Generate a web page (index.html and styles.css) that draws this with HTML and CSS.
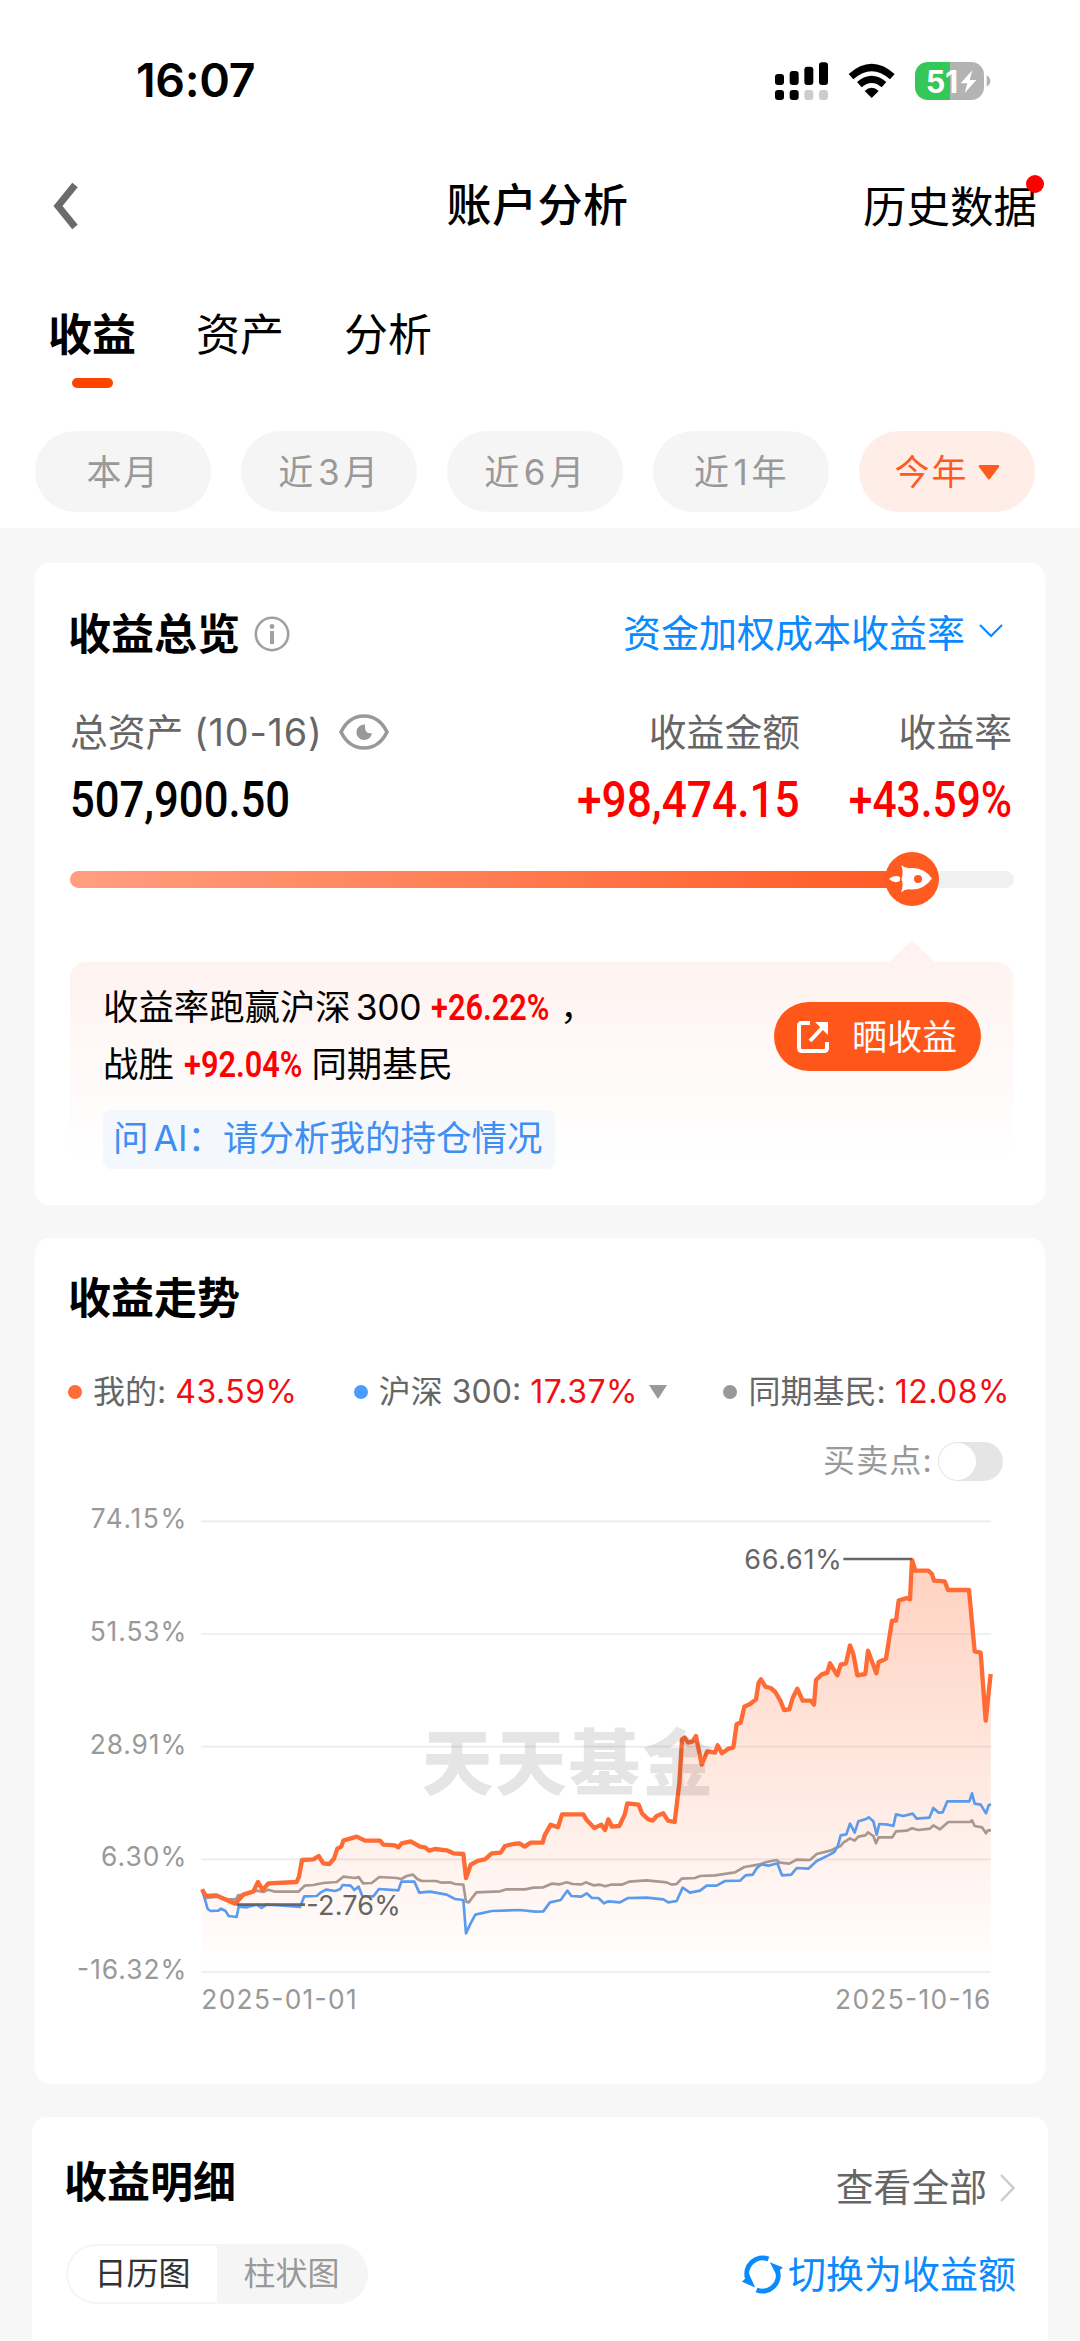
FILE: index.html
```html
<!DOCTYPE html>
<html lang="zh-CN">
<head>
<meta charset="utf-8">
<title>账户分析</title>
<link rel="stylesheet" href="styles.css">
</head>
<body>
<header class="top">
  <div class="status">
    <span class="time">16:07</span>
    <svg class="status-icons" viewBox="0 0 720 180">
      <g fill="#000">
        <rect x="45" y="69" width="27" height="33" rx="9"/><rect x="89" y="60" width="27" height="42" rx="9"/>
        <rect x="133" y="47" width="27" height="55" rx="9"/><rect x="177" y="34" width="27" height="68" rx="9"/>
        <rect x="45" y="117" width="27" height="30" rx="9"/><rect x="89" y="117" width="27" height="30" rx="9"/>
      </g>
      <g fill="#ccc"><rect x="133" y="117" width="27" height="30" rx="9"/><rect x="177" y="117" width="27" height="30" rx="9"/></g>
      <g fill="none" stroke="#000" stroke-width="21"><path d="M273 77Q335 22 397 77"/><path d="M298 101Q335 69 372 101"/></g>
      <path d="M314 120Q335 101 356 120L335 141Z"/>
      <clipPath id="bat"><rect x="465" y="33" width="207" height="114" rx="38"/></clipPath>
      <g clip-path="url(#bat)"><rect x="465" y="33" width="105" height="114" fill="#34c759"/><rect x="570" y="33" width="102" height="114" fill="#b3b3b3"/></g>
      <path d="M680 73Q691 79 691 90T680 107Z" fill="#b3b3b3"/>
      <text class="battery" x="497" y="125" textLength="98">51</text>
      <path d="M637 58L602 97H622L614 126L649 87H629Z" fill="#fff"/>
    </svg>
  </div>
  <nav class="nav">
    <svg class="back" viewBox="0 0 26 48"><path d="M23 3L6 24L23 45"/></svg>
    <h1 class="page-title">账户分析</h1>
    <span class="history">历史数据<i class="badge"></i></span>
  </nav>
  <div class="tabs">
    <span class="tab tab-on">收益</span><span class="tab">资产</span><span class="tab">分析</span>
  </div>
  <div class="pills">
    <span class="pill">本月</span><span class="pill">近<span class="num">3</span>月</span><span class="pill">近<span class="num">6</span>月</span><span class="pill">近<span class="num">1</span>年</span>
    <span class="pill pill-on">今年<svg class="caret" viewBox="0 0 22 16"><path d="M2 1H20Q22 1 21 3L12 15Q11 16 10 15L1 3Q0 1 2 1Z"/></svg></span>
  </div>
</header>

<main class="cards">
  <section class="card overview">
    <div class="card-head">
      <h2 class="card-title">收益总览</h2>
      <svg class="info" viewBox="0 0 36 36"><circle cx="18" cy="18" r="16.2" fill="none" stroke="#a0a0a0" stroke-width="2.6"/><circle cx="18" cy="10.5" r="2.4" fill="#a0a0a0"/><path d="M18 15V28" stroke="#a0a0a0" stroke-width="4"/></svg>
      <span class="method">资金加权成本收益率</span>
      <svg class="chev-down" viewBox="0 0 24 14"><path d="M1 1L12 12L23 1"/></svg>
    </div>
    <div class="stats">
      <div class="stat">
        <div class="label">总资产&nbsp;<span class="date">(10-16)</span>
          <svg class="eye" viewBox="0 0 50 36"><path d="M2 18Q10 2 25 2T48 18Q40 34 25 34T2 18Z" fill="none" stroke="#999" stroke-width="3.6"/><path d="M26 10.500A7.800 7.800 0 1 0 33 19Q25 20.500 26 10.500Z" fill="#999"/></svg>
        </div>
        <div class="value"><b class="din din-total">507,900.50</b></div>
      </div>
      <div class="stat right"><div class="label">收益金额</div><div class="value red"><b class="din din-gain">+98,474.15</b></div></div>
      <div class="stat right"><div class="label">收益率</div><div class="value red"><b class="din din-rate">+43.59%</b></div></div>
    </div>
    <div class="slider">
      <div class="slider-fill"></div>
      <svg class="rocket" viewBox="0 0 54 54"><circle cx="27" cy="27" r="27" fill="#ff5a1f"/><path d="M16 13Q21 17 26 16Q39 15 47 26.500Q39 38 26 37.500Q21 36 16 40.500Q19 33 16.500 27Q19 20 16 13Z" fill="#fff"/><circle cx="33" cy="27" r="4" fill="#ff5a1f"/><path d="M4 27Q9 22 15 25V29Q9 32 4 27Z" fill="#fff"/></svg>
    </div>
    <div class="callout">
      <div class="callout-row">
        <p class="beat">收益率跑赢沪深<span class="n300">300</span> <b class="din din-s">+26.22%</b><span class="comma">，</span><br>战胜 <b class="din din-s">+92.04%</b> 同期基民</p>
        <span class="share"><svg class="share-icon" viewBox="0 0 34 34"><path d="M14 3H6Q3 3 3 6V28Q3 31 6 31H28Q31 31 31 28V22"/><path d="M14 21L28 6"/><path d="M19 2H32V15Z" fill="#fff" stroke="none"/></svg>晒收益</span>
      </div>
      <span class="ask">问<span class="ai">AI</span>：请分析我的持仓情况</span>
    </div>
  </section>

  <section class="card trend">
    <h2 class="card-title">收益走势</h2>
    <div class="legend">
      <span class="key key-me"><i class="dot"></i>我的: <em>43.59%</em></span>
      <span class="key key-hs"><i class="dot"></i>沪深 300: <em>17.37%</em><svg class="tri" viewBox="0 0 18 14"><path d="M0 0H18L9 14Z"/></svg></span>
      <span class="key key-peer"><i class="dot"></i>同期基民: <em>12.08%</em></span>
    </div>
    <div class="points">买卖点:<span class="switch"></span></div>
    <svg class="chart" viewBox="-360 0 2880 1560">
      <defs><linearGradient id="area" gradientUnits="userSpaceOnUse" x1="0" y1="180" x2="0" y2="1416"><stop offset="0" stop-color="#ff6b35" stop-opacity=".31"/><stop offset=".5" stop-color="#ff6b35" stop-opacity=".16"/><stop offset="1" stop-color="#ff6b35" stop-opacity="0"/></linearGradient></defs>
      <path class="grid" d="M64 64H2433M64 402H2433M64 740H2433M64 1078H2433M64 1416H2433"/>
      <g class="axis" text-anchor="end"><text x="19" y="85" textLength="287">74.15%</text><text x="19" y="423" textLength="290">51.53%</text><text x="19" y="761" textLength="290">28.91%</text><text x="19" y="1099" textLength="256">6.30%</text><text x="19" y="1437" textLength="328">-16.32%</text></g>
      <g class="axis"><text x="64" y="1528" textLength="466">2025-01-01</text><text x="1965" y="1528" textLength="466">2025-10-16</text></g>
      <path fill="url(#area)" d="M66 1168L78 1188L108 1186L165 1211L190 1184L220 1174L234 1146L248 1170L265 1150L350 1146L357 1130L366 1080L400 1078L416 1068L430 1090L448 1092L462 1076L472 1046L490 1022L530 1010L555 1022L600 1026L655 1042L665 1032L692 1024L745 1052L765 1047L850 1062L858 1134L872 1094L895 1082L935 1060L962 1058L975 1038L1018 1030L1034 1040L1052 1028L1088 1028L1094 1006L1112 974L1134 982L1146 943L1210 943L1243 984L1264 974L1275 990L1285 958L1296 980L1318 978L1334 944L1342 910L1376 914L1386 940L1418 962L1450 940L1474 966L1484 964L1498 850L1506 720L1530 728L1548 708L1565 794L1582 754L1605 758L1613 736L1626 760L1660 742L1670 672L1682 668L1693 620L1710 612L1728 598L1743 538L1756 560L1786 576L1812 630L1828 628L1838 594L1852 566L1868 602L1902 614L1908 540L1950 490L1972 526L1982 494L1998 490L2010 436L2032 526L2056 522L2064 452L2089 520L2096 486L2118 476L2136 362L2148 362L2156 302L2190 298L2196 180L2206 212L2252 214L2262 242L2294 244L2304 270L2367 270L2384 454L2402 458L2417 662L2432 522V1416H66Z"/>
      <polyline class="line-peer" points="66,1168 78,1194 115,1190 145,1198 168,1198 174,1186 200,1182 215,1178 230,1172 250,1176 265,1169 285,1175 355,1175 374,1157 400,1155 430,1149 470,1146 490,1130 525,1134 536,1131 549,1150 575,1149 598,1131 650,1134 664,1137 680,1128 699,1124 712,1137 725,1143 768,1143 785,1148 810,1147 825,1152 850,1154 858,1205 866,1207 889,1177 960,1174 980,1168 1035,1168 1060,1163 1090,1162 1115,1151 1140,1153 1160,1147 1178,1152 1205,1153 1217,1147 1240,1156 1260,1154 1276,1159 1292,1154 1325,1154 1347,1145 1400,1141 1460,1147 1475,1154 1490,1152 1505,1136 1545,1134 1560,1128 1605,1126 1665,1117 1693,1101 1735,1094 1760,1086 1790,1080 1800,1088 1828,1091 1850,1079 1890,1080 1910,1062 1950,1052 1982,1038 1990,1028 2010,1015 2024,1022 2035,1010 2056,1006 2064,997 2080,1008 2088,1030 2096,1012 2137,1012 2148,994 2180,992 2196,985 2215,990 2250,986 2260,976 2280,988 2305,966 2370,966 2376,961 2384,978 2406,982 2418,1000 2424,991 2433,991"/>
      <polyline class="line-hs" points="66,1170 74,1195 83,1227 92,1233 115,1232 123,1226 136,1232 146,1248 170,1251 176,1220 200,1222 230,1214 245,1224 260,1214 300,1216 360,1221 373,1189 410,1188 423,1177 438,1169 465,1173 480,1168 488,1155 512,1157 523,1170 536,1160 547,1188 580,1189 597,1167 655,1171 664,1145 703,1145 718,1178 750,1175 800,1184 825,1197 850,1200 858,1300 870,1274 886,1244 935,1233 1020,1230 1065,1235 1090,1234 1110,1207 1142,1200 1162,1172 1174,1188 1204,1190 1220,1180 1236,1194 1255,1194 1272,1210 1285,1204 1320,1207 1344,1194 1400,1193 1450,1198 1465,1207 1490,1203 1508,1163 1530,1178 1560,1172 1580,1157 1610,1157 1635,1143 1680,1142 1697,1126 1718,1124 1730,1105 1745,1093 1765,1097 1792,1090 1806,1126 1834,1124 1850,1104 1885,1106 1910,1083 1945,1066 1963,1056 1974,1036 1982,1006 1999,1003 2010,971 2024,998 2035,964 2056,958 2066,952 2080,964 2090,1004 2098,972 2125,974 2140,978 2148,943 2170,948 2198,941 2210,956 2248,953 2260,924 2276,938 2288,937 2302,904 2368,904 2376,880 2384,911 2402,914 2418,940 2426,916 2433,913"/>
      <polyline class="line-me" points="66,1168 78,1188 108,1186 165,1211 190,1184 220,1174 234,1146 248,1170 265,1150 350,1146 357,1130 366,1080 400,1078 416,1068 430,1090 448,1092 462,1076 472,1046 484,1040 490,1022 530,1010 555,1022 600,1022 610,1034 645,1036 655,1042 665,1030 692,1024 720,1040 735,1042 747,1052 765,1047 800,1051 820,1060 850,1062 858,1134 872,1094 895,1082 915,1078 935,1060 962,1058 975,1038 1000,1032 1018,1030 1034,1040 1052,1028 1088,1028 1094,1006 1112,974 1134,982 1146,943 1210,943 1220,960 1243,984 1264,974 1275,990 1285,958 1296,980 1318,978 1334,944 1342,910 1376,914 1386,940 1405,958 1418,962 1430,948 1450,940 1464,962 1484,966 1498,850 1506,718 1514,713 1524,728 1538,724 1548,708 1565,794 1582,754 1605,758 1613,736 1626,760 1645,746 1660,742 1670,672 1682,668 1693,620 1710,612 1728,598 1736,548 1743,538 1756,560 1772,564 1786,576 1802,604 1812,630 1828,628 1838,594 1852,566 1868,602 1892,602 1902,614 1908,540 1924,524 1942,518 1950,490 1972,526 1982,494 1998,490 2010,436 2020,462 2032,526 2056,522 2064,452 2089,520 2096,486 2118,476 2136,362 2148,362 2156,302 2180,294 2190,298 2196,180 2206,212 2245,212 2256,222 2262,242 2294,244 2304,270 2367,270 2384,454 2402,458 2417,662 2432,522"/>
      <path class="leader" d="M170 1214H375M1990 177H2196"/>
      <g class="mark"><text x="379" y="1244" textLength="283">-2.76%</text><text x="1693" y="206" textLength="292">66.61%</text></g>
      <text class="watermark" x="725" y="868" textLength="876">天天基金</text>
    </svg>
  </section>

  <section class="card detail">
    <div class="card-head">
      <h2 class="card-title">收益明细</h2>
      <span class="all">查看全部</span>
      <svg class="chev-right" viewBox="0 0 15 28"><path d="M1 1L13.500 14L1 27"/></svg>
    </div>
    <div class="detail-row">
      <div class="segment"><span class="seg seg-on">日历图</span><span class="seg">柱状图</span></div>
      <span class="switch-to"><svg class="cycle" viewBox="0 0 124 118"><g fill="none" stroke="#0a8aff" stroke-width="15"><path d="M17 72A48 48 0 0 1 80 12"/><path d="M107 46A48 48 0 0 1 44 106"/></g><path d="M84 22L124 38L102 56ZM0 81L22 59L40 98Z" fill="#0a8aff"/></svg>切换为收益额</span>
    </div>
  </section>
</main>
</body>
</html>
```
FILE: styles.css
```css
* { box-sizing: border-box; }
body { margin: 0; width: 1080px; height: 2341px; overflow: hidden; background: #f7f7f7; color: #000; font-family: Inter, "Noto Sans CJK SC", sans-serif; line-height: 1.2; }
svg { display: block; flex: none; }
h1, h2, p { margin: 0; }
em { font-style: normal; }

.top { height: 528px; background: #fff; }
.status { height: 161px; display: flex; align-items: center; justify-content: space-between; padding: 0 80px 0 136px; }
.time { font-size: 46.5px; font-weight: 600; letter-spacing: -0.3px; }
.status-icons { width: 240px; height: 60px; }
.battery { font-size: 92px; font-weight: 700; fill: #fff; }
.nav { height: 90px; display: grid; grid-template-columns: 1fr auto 1fr; align-items: center; padding: 0 43px 0 52px; }
.back { width: 26px; height: 48px; fill: none; stroke: #6b6b6b; stroke-width: 7; }
.page-title { font-size: 45px; font-weight: 500; letter-spacing: 0.5px; margin-left: -14px; }
.history { position: relative; justify-self: end; font-size: 43.5px; padding-top: 2px; }
.badge { position: absolute; right: -7px; top: -4px; width: 18px; height: 18px; border-radius: 50%; background: #f00; }
.tabs { display: flex; gap: 60px; padding: 54px 0 0 48px; height: 180px; }
.tab { display: flex; flex-direction: column; align-items: center; gap: 13px; font-size: 44px; line-height: 60px; }
.tab-on { font-weight: 700; }
.tab-on::after { content: ""; width: 41px; height: 10px; border-radius: 5px; background: #ff4400; }
.pills { display: flex; gap: 30px; padding: 0 35px; }
.pill { width: 176px; height: 81px; border-radius: 41px; background: #f5f5f5; color: #999; font-size: 35px; letter-spacing: 1.6px; display: flex; align-items: center; justify-content: center; }
.num { margin: 0 2px 0 3px; }
.pill-on { background: #ffeee8; color: #ff5a1f; letter-spacing: 2px; gap: 9px; }
.caret { width: 22px; height: 16px; fill: #ff5a1f; }

.cards { display: flex; flex-direction: column; gap: 33px; padding: 35px 32px 0; }
.card { background: #fff; border-radius: 15px; }
.overview, .trend { margin: 0 3px; padding: 0 33px 0 35px; }
.card-head { display: flex; align-items: center; }
.card-title { margin-left: -2px; padding-top: 1px; font-size: 43px; font-weight: 700; line-height: 60px; }
.overview { height: 642px; padding-top: 40px; }
.info { width: 36px; height: 36px; margin-left: 14px; }
.method { margin-left: auto; font-size: 38px; color: #0a8aff; }
.chev-down { width: 24px; height: 14px; margin: -6px 9px 0 14px; fill: none; stroke: #0a8aff; stroke-width: 2.2; }
.stats { display: grid; grid-template-columns: 1fr auto 212px; margin-top: 38px; }
.right { text-align: right; }
.label { display: flex; align-items: center; font-size: 37.8px; line-height: 60px; color: #666; }
.right .label { justify-content: flex-end; }
.date { letter-spacing: 0.8px; }
.eye { width: 50px; height: 36px; margin-left: 16px; }
.value { height: 77px; line-height: 77px; }
.red, .din-s { color: #ff0000; }
em { color: #f01010; letter-spacing: 0.5px; }
.din { display: inline-block; font-family: Roboto, sans-serif; font-weight: 500; font-size: 50px; transform-origin: 0 50%; }
.din-total { transform: scaleX(0.872); }
.din-gain { transform-origin: 100% 50%; transform: scaleX(0.885); }
.din-rate { transform-origin: 100% 50%; transform: scaleX(0.85); }
.slider { position: relative; width: 944px; height: 17px; margin-top: 32px; border-radius: 9px; background: #f1f1f1; }
.slider-fill { width: 842px; height: 17px; border-radius: 9px; background: linear-gradient(90deg, #ff9f80, #ff5a24); }
.rocket { position: absolute; left: 815px; top: -19px; width: 54px; height: 54px; }
.callout { position: relative; width: 943px; height: 215px; margin-top: 74px; padding: 16px 32px 0 33px; border-radius: 16px; background: linear-gradient(#fef3f0, #fff 92%); }
.callout::before { content: ""; position: absolute; left: 818px; top: -22px; width: 48px; height: 23px; background: #fef3f0; clip-path: polygon(50% 0, 100% 100%, 0 100%); }
.callout-row { display: flex; justify-content: space-between; }
.beat { padding-top: 1px; font-size: 35.4px; line-height: 57px; white-space: nowrap; }
.n300 { margin-left: 5px; letter-spacing: -0.3px; }
.din-s { font-size: 37px; line-height: 50px; font-weight: 600; transform: scaleX(0.83); margin: 0 -25px 0 0; }
.comma { margin-left: 11px; }
.share { display: flex; align-items: center; width: 207px; height: 69px; margin-top: 24px; padding-left: 22px; gap: 22px; border-radius: 35px; background: #ff5619; color: #fff; font-size: 35px; }
.share-icon { width: 34px; height: 34px; fill: none; stroke: #fff; stroke-width: 4; }
.ask { display: flex; align-items: center; width: 452px; height: 59px; margin-top: 17px; padding-left: 10px; border-radius: 8px; background: #f4f7fc; color: #3f8ef2; font-size: 35.5px; white-space: nowrap; }
.ai { margin-left: 5px; }

.trend { height: 846px; padding-top: 29px; }
.legend { display: flex; justify-content: space-between; margin: 44px 2px 0 -2px; line-height: 40px; }
.key { display: flex; align-items: center; white-space: pre; font-size: 32px; color: #666; }
.dot { width: 14px; height: 14px; border-radius: 50%; margin-right: 11px; background: #999; }
.key-me .dot { background: #ff6b35; }
.key-hs .dot { background: #4a9cff; }
.tri { width: 18px; height: 14px; margin-left: 11px; fill: #999; }
.points { display: flex; justify-content: flex-end; align-items: center; height: 40px; margin-top: 29px; padding-right: 9px; font-size: 32px; letter-spacing: 1.2px; color: #999; }
.switch { width: 65px; height: 39px; margin-left: 5px; padding: 1px; border-radius: 20px; background: #e5e5e5; }
.switch::before { content: ""; display: block; width: 37px; height: 37px; border-radius: 50%; background: #fff; }
.chart { width: 960px; height: 520px; margin: 19px 0 0 -10px; }
.grid { fill: none; stroke: #ebebeb; stroke-width: 5; }
.axis { fill: #999; font-size: 79px; }
.mark { fill: #666; font-size: 81px; }
.line-me, .line-hs, .line-peer { fill: none; stroke-linejoin: round; }
.line-me { stroke: #ff6b35; stroke-width: 13; }
.line-hs { stroke: #5a9bee; stroke-width: 8; }
.line-peer { stroke: #a8988f; stroke-width: 8; }
.leader { fill: none; stroke: #666; stroke-width: 8; }
.watermark { font-family: "Noto Sans CJK SC", sans-serif; font-size: 214px; font-weight: 900; fill: #000; fill-opacity: 0.1; }

.detail { height: 300px; padding: 34px 33px 0 34px; }
.all { margin: 12px 13px 0 auto; font-size: 37.8px; line-height: 47px; color: #666; }
.chev-right { width: 15px; height: 28px; margin-top: 13px; fill: none; stroke: #ccc; stroke-width: 2.5; }
.detail-row { display: flex; justify-content: space-between; align-items: center; margin: 32px -1px 0 0; }
.segment { display: flex; width: 302px; height: 60px; border-radius: 30px; padding: 2px; background: #f5f5f5; font-size: 32px; color: #999; }
.seg { width: 149px; display: flex; align-items: center; justify-content: center; }
.seg-on { background: #fff; color: #333; border-radius: 28px 0 0 28px; }
.switch-to { display: flex; align-items: center; gap: 5px; font-size: 38px; line-height: 60px; color: #0a8aff; }
.cycle { width: 41px; height: 39px; }
```
